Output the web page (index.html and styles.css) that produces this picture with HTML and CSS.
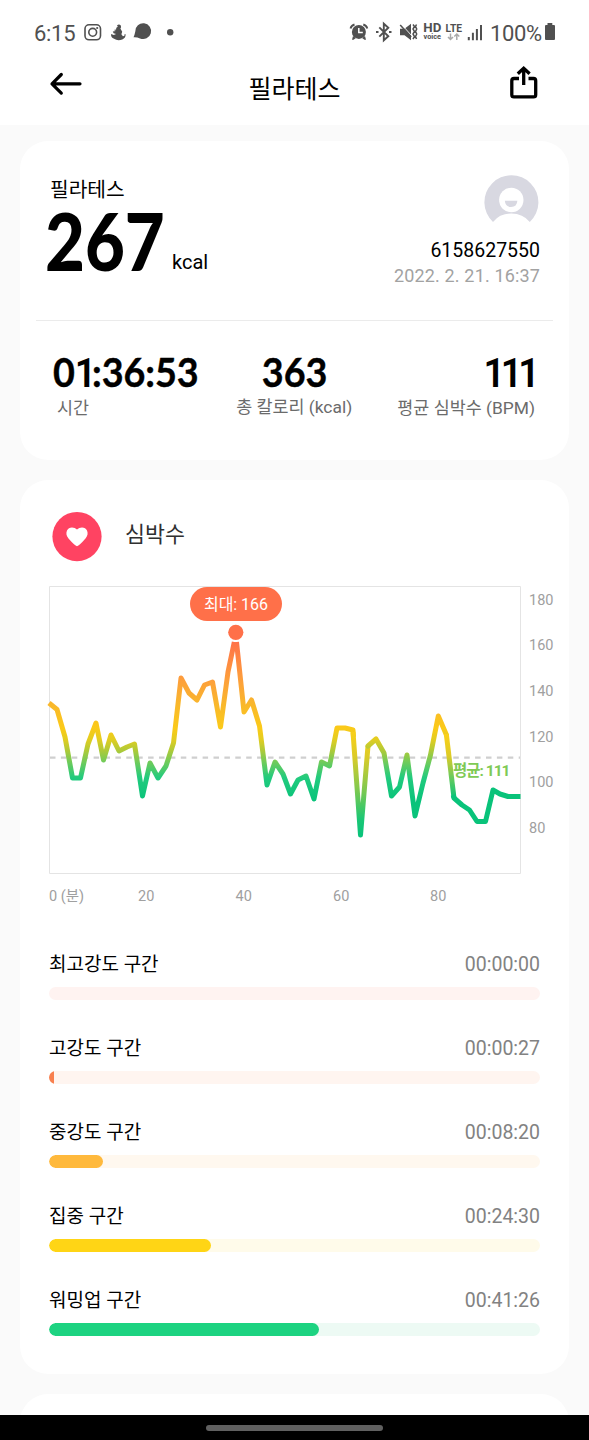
FILE: index.html
```html
<!DOCTYPE html>
<html lang="ko">
<head>
<meta charset="utf-8">
<title>필라테스</title>
<link rel="stylesheet" href="styles.css">
</head>
<body>
<div class="screen">
  <div class="status">
    <span class="clock">6:15</span>
    <svg class="status-left" width="94" height="24" viewBox="82 20 94 24">
      <g fill="none" stroke="#505050" stroke-width="1.6"><rect x="85" y="24.800" width="15.500" height="15" rx="4"/><circle cx="92.700" cy="32.300" r="3.900"/></g>
      <circle cx="97.200" cy="28" r="1.100" fill="#505050"/>
      <path fill="#505050" d="M117 25.500q2-2.200 3.800 0 .8 1.800-.4 3l1.800 3.200-.8 2.600 1.500 2q2.400-.2 1.600-2.200l1.100.2q.2 3.600-3.300 5.300-5 1.500-8.200-.8-3.500-1.300-3-4.700l2.700 1 2.300-1.100-2.500-.8-.8-1.800 3-.4-2-1 2.300-.6.200-1.600 1.500-1z"/>
      <path fill="#505050" d="M133.500 37.200q1-1.800 1.800-5.800a7.900 7.900 0 1 1 4.700 7q-3-1.500-6.500-1.200z"/>
      <circle cx="170.200" cy="32.200" r="3.200" fill="#505050"/>
    </svg>
    <svg class="status-right" width="136" height="24" viewBox="348 20 136 24">
      <g fill="#505050">
        <circle cx="358.900" cy="31.900" r="7"/>
        <path d="M353 36l3 2-2.500 1.700h-1.500zm12 0l-3 2 2.500 1.700h1.500z"/>
      </g>
      <path d="M350.500 28.500q.8-3 4-4M367.300 28.500q-.8-3-4-4" fill="none" stroke="#505050" stroke-width="1.900"/>
      <path d="M358.800 28v4.500h4" fill="none" stroke="#fff" stroke-width="1.500"/>
      <path d="M379.300 27.300l9 9-4.500 4V23.700l4.500 4-9 9" fill="none" stroke="#505050" stroke-width="1.900"/>
      <path d="M376 32h2.500M389 32h2.500" stroke="#505050" stroke-width="2.200"/>
      <path fill="#505050" d="M400 28.700h4.500l6.500-5v16.500l-6.500-5H400z"/>
      <path d="M401 24l11 12" stroke="#fff" stroke-width="1"/>
      <path d="M400.200 25l11 12" stroke="#505050" stroke-width="1.500"/>
      <path d="M413 24.500l1.500 2-1.500 2.500 1.500 2.500-1.500 2.500 1.500 2.500-1.500 2.700M416.500 24.500l-1 2 1.200 2.500-1.200 2.500 1.200 2.500-1.200 2.500 1 2.500" fill="none" stroke="#505050" stroke-width="1.500"/>
      <g class="net"><text x="423.300" y="32.300" font-size="12.500" textLength="18" lengthAdjust="spacingAndGlyphs">HD</text><text x="423.500" y="38.800" font-size="7" textLength="17.500" lengthAdjust="spacingAndGlyphs">voice</text><text x="445.500" y="31.500" font-size="11" textLength="16.500" lengthAdjust="spacingAndGlyphs">LTE</text></g>
      <path d="M450.500 33.500v6m-2.500-2.500l2.500 2.500 2.500-2.500M456.800 40v-6m-2.500 2.500l2.500-2.500 2.500 2.500" fill="none" stroke="#aaa" stroke-width="1.500"/>
      <g fill="#505050"><path d="M467.800 37h2v3.200h-2zM471.900 32.800h2v7.400h-2zM475.900 29h2v11.200h-2zM480 25h2v15.200h-2z"/></g>
    </svg>
    <span class="percent">100%</span>
    <svg class="battery" width="12" height="18" viewBox="0 0 12 18"><path fill="#505050" d="M3.500 0h4.800v2H10q1 0 1 1v13q0 1-1 1H2q-1 0-1-1V3q0-1 1-1h1.500z"/></svg>
  </div>
  <header class="header">
    <svg class="back" width="34" height="26" viewBox="48 71 34 26"><path d="M52 83.800h28M61.300 74.500L52 83.800l9.300 9.300" fill="none" stroke="#000" stroke-width="3.200" stroke-linecap="round" stroke-linejoin="round"/></svg>
    <h1 class="title">필라테스</h1>
    <svg class="share" width="30" height="34" viewBox="509 66 30 34"><path d="M519 78.500H514q-2.200 0-2.200 2.200v14q0 2.200 2.200 2.200h19.500q2.200 0 2.200-2.200v-14q0-2.200-2.200-2.200H528.500M523.700 85V69M517.800 73.800l5.900-5.500 5.900 5.500" fill="none" stroke="#000" stroke-width="3.300"/></svg>
  </header>

  <main class="feed">
    <section class="card summary">
      <div class="hero">
        <div class="burn">
          <div class="activity">필라테스</div>
          <div class="kcal"><span class="kcal-value">267</span><span class="kcal-unit">kcal</span></div>
        </div>
        <div class="user">
          <svg class="avatar" width="56" height="50" viewBox="483 175 56 50">
            <path fill="#d8d8e1" d="M493 222A27 27 0 1 1 529.800 222Q523 213.500 511.300 213.500T493 222z"/>
            <circle cx="511.300" cy="200" r="12.200" fill="#fff"/>
            <path fill="#d8d8e1" d="M504.800 200.800h12.600q-.5 6.200-6.300 6.200t-6.300-6.200z"/>
          </svg>
          <div class="user-id">6158627550</div>
          <div class="date">2022. 2. 21. 16:37</div>
        </div>
      </div>
      <div class="stats">
        <div class="stat time"><div class="value">0<span class="one">1</span>:36:53</div><div class="label">시간</div></div>
        <div class="stat total"><div class="value">363</div><div class="label">총 칼로리 (kcal)</div></div>
        <div class="stat pulse"><div class="value"><span class="one">111</span></div><div class="label">평균 심박수 (BPM)</div></div>
      </div>
    </section>

    <section class="card heart">
      <div class="heart-head">
        <svg width="50" height="50" viewBox="0 0 50 50"><circle cx="25" cy="24.600" r="24.600" fill="#ff4362"/><path fill="#fff" d="M25 34.300Q22.800 33.800 16.300 26.300 13.300 22.500 15 18.600 16.500 15.500 20 15.400 23 15.500 25 17.600 27 15.500 30 15.400 33.500 15.500 35 18.600 36.700 22.500 33.700 26.300 27.200 33.800 25 34.300z"/></svg>
        <h2 class="heart-title">심박수</h2>
      </div>
      <svg class="chart" width="549" height="330" viewBox="20 580 549 330">
        <defs>
          <linearGradient id="zones" gradientUnits="userSpaceOnUse" x1="0" y1="640" x2="0" y2="800">
            <stop offset="0" stop-color="#ff7049"/><stop offset=".25" stop-color="#fd9f3b"/><stop offset=".4" stop-color="#f9b72c"/><stop offset=".55" stop-color="#fbca18"/><stop offset=".62" stop-color="#e3cd20"/><stop offset=".69" stop-color="#afca38"/><stop offset=".76" stop-color="#72cb59"/><stop offset=".86" stop-color="#22cb7e"/><stop offset="1" stop-color="#09c37a"/>
          </linearGradient>
          <linearGradient id="steep" gradientUnits="userSpaceOnUse" x1="0" y1="730" x2="0" y2="835">
            <stop offset="0" stop-color="#fbd019"/><stop offset=".25" stop-color="#dccb27"/><stop offset=".55" stop-color="#84c94d"/><stop offset=".85" stop-color="#1bc775"/><stop offset="1" stop-color="#09c37a"/>
          </linearGradient>
          <linearGradient id="drop" gradientUnits="userSpaceOnUse" x1="0" y1="734" x2="0" y2="798">
            <stop offset="0" stop-color="#fbd019"/><stop offset=".35" stop-color="#dccb27"/><stop offset=".65" stop-color="#72cb59"/><stop offset="1" stop-color="#09c37a"/>
          </linearGradient>
        </defs>
        <path d="M49.500 586.500H520.500V873.500H49.500z" fill="none" stroke="#e4e4e4"/>
        <path d="M50 757.700H520" stroke="#cfcfcf" stroke-width="2.200" stroke-dasharray="5.500 5.400"/>
        <g fill="none" stroke-width="5" stroke-linejoin="round">
          <polyline stroke="url(#zones)" points="49,703 57,709.500 65,737 72.500,778 80.500,778 88,744 96,723 103.500,760 111,735 119,751 127,747 134.500,744 142.500,796 150,763 158,778 166,766 173.500,743 181,678 189,693 197,700 204.500,685 212.500,682 220.500,727 228,672 234.300,642"/>
          <polyline stroke="url(#zones)" points="236.500,642 244,712 251.500,700 259.500,726 267,785 275,762 283,774 290.500,794 298,780 306,776 314,799 321.500,762 329.500,766 337,728 345,728 353,730 353.500,737"/>
          <polyline stroke="url(#steep)" points="353,732 360.500,835 368,746"/>
          <polyline stroke="url(#zones)" stroke-linecap="round" points="368,746 376,739 384,753 391.500,796 399.500,787 407,755 415,816 423,783 430.500,755 438.300,716 446.500,735"/>
          <polyline stroke="url(#drop)" points="446.300,734 454,798"/>
          <polyline stroke="#09c37a" points="453.200,795 454,798 462,805 469.500,810 477,821.500 485.500,821.500 493,790 500,794 508,796.500 520.500,796.500"/>
        </g>
        <circle cx="235.800" cy="632.300" r="8.700" fill="#fff"/>
        <circle cx="235.800" cy="632.300" r="7.600" fill="#ff7049"/>
        <rect x="190" y="587" width="92" height="34" rx="17" fill="#ff7049"/>
        <text class="peak" x="204" y="609.600" textLength="64">최대: 166</text>
        <text class="average" x="453" y="776" textLength="57.500">평균: 111</text>
        <g class="axis">
          <text x="529" y="604.500">180</text><text x="529" y="650.200">160</text><text x="529" y="695.800">140</text><text x="529" y="741.500">120</text><text x="529" y="787">100</text><text x="529" y="832.500">80</text>
          <text x="49" y="901" textLength="35">0 (분)</text><text x="138" y="901">20</text><text x="235.500" y="901">40</text><text x="333" y="901">60</text><text x="430" y="901">80</text>
        </g>
      </svg>
      <div class="zones">
        <div class="zone peak-zone"><div class="row"><span>최고강도 구간</span><time>00:00:00</time></div><div class="track"></div></div>
        <div class="zone high"><div class="row"><span>고강도 구간</span><time>00:00:27</time></div><div class="track"><div class="fill" style="width:5px"></div></div></div>
        <div class="zone mid"><div class="row"><span>중강도 구간</span><time>00:08:20</time></div><div class="track"><div class="fill" style="width:54px"></div></div></div>
        <div class="zone focus"><div class="row"><span>집중 구간</span><time>00:24:30</time></div><div class="track"><div class="fill" style="width:162px"></div></div></div>
        <div class="zone warm"><div class="row"><span>워밍업 구간</span><time>00:41:26</time></div><div class="track"><div class="fill" style="width:270px"></div></div></div>
      </div>
    </section>
    <section class="card next"></section>
  </main>
  <footer class="nav"><div class="handle"></div></footer>
</div>
</body>
</html>
```

FILE: styles.css
```css
* { box-sizing: border-box; }
body { margin: 0; background: #fafafa; }
.screen { width: 589px; height: 1440px; overflow: hidden; display: flex; flex-direction: column; font-family: Roboto, "Noto Sans CJK KR", sans-serif; color: #000; }
svg { display: block; flex: none; }

.status { height: 65px; flex: none; display: flex; align-items: flex-start; padding: 20px 33px 0 34px; background: #fff; color: #505050; }
.clock { width: 48px; font-size: 22px; line-height: 27px; letter-spacing: -.3px; }
.status-right { margin-left: 172px; }
.net text { font-family: Roboto, sans-serif; font-weight: 700; fill: #505050; }
.percent { width: 54px; margin-left: 6px; font-size: 22px; line-height: 27px; letter-spacing: -.4px; }
.battery { margin-top: 3px; }

.header { height: 60px; flex: none; display: flex; justify-content: space-between; padding: 0 50px 0 48px; background: #fff; }
.back { margin-top: 6px; }
.share { margin-top: 1px; }
.title { margin: 6px 2px 0 0; font-size: 25px; line-height: 37px; font-weight: 400; }

.feed { flex: 1; min-height: 0; overflow: hidden; display: flex; flex-direction: column; gap: 20px; padding: 16px 20px 0; }
.card { flex: none; background: #fff; border-radius: 28px; }
.summary { height: 319px; padding: 0 16px; }
.hero { height: 180px; display: flex; justify-content: space-between; padding: 34px 13px 0 14px; border-bottom: 1.500px solid #ebebeb; }
.activity { height: 28px; font-size: 20.300px; line-height: 30px; }
.kcal { display: flex; height: 78px; }
.kcal-value { width: 121px; margin-left: -5px; font: 900 80px/74px Lato, sans-serif; transform: scaleX(.86); transform-origin: left; }
.kcal-unit { margin: 46px 0 0 6px; font-size: 20px; line-height: 26px; }
.user { display: flex; flex-direction: column; align-items: flex-end; }
.avatar { margin-right: 1px; }
.user-id { margin-top: 13px; font-size: 19.500px; line-height: 26px; }
.date { font-size: 18px; line-height: 24px; letter-spacing: .15px; color: #a2a2a2; }
.stats { display: flex; justify-content: space-between; padding: 28px 18px 0 17px; }
.stat { display: flex; flex-direction: column; }
.value { font: 700 41px/46px Lato, sans-serif; white-space: nowrap; letter-spacing: -.1px; transform: scaleX(.92); -webkit-text-stroke: .4px #000; }
.value .one { font-family: Roboto, sans-serif; font-weight: 600; letter-spacing: -4.600px; -webkit-text-stroke: 0; }
.label { font-size: 17.400px; line-height: 25px; color: #6b6b6b; white-space: nowrap; }
.time { width: 138px; }
.time .value { transform-origin: left; }
.time .label { padding-left: 4px; }
.total { align-items: center; }
.pulse { align-items: flex-end; }
.pulse .value { transform-origin: right; }

.heart { height: 894px; }
.heart-head { height: 100px; display: flex; padding: 32px 0 0 32px; gap: 23px; }
.heart-title { margin: 6px 0 0; font-size: 21.700px; line-height: 34px; font-weight: 400; color: #303030; }
.chart text { font-family: Roboto, "Noto Sans CJK KR", sans-serif; }
.chart .peak { font-size: 16px; fill: #fff; }
.chart .average { font-size: 15.500px; font-weight: 700; fill: #80ca55; }
.chart .axis text { font-size: 14.500px; fill: #a0a0a0; }
.zones { display: flex; flex-direction: column; gap: 42px; padding: 37px 29px 0 29px; }
.zone { height: 42px; }
.row { height: 40px; display: flex; justify-content: space-between; font-size: 19px; line-height: 36px; }
.row time { font-size: 19.500px; color: #828282; }
.track { height: 13px; overflow: hidden; border-radius: 7px; }
.fill { height: 13px; border-radius: 7px; }
.peak-zone .track { background: #fff3f1; }
.high .track { background: #fff5f0; }
.high .fill { background: #f8804f; border-radius: 7px 0 0 7px; }
.mid .track { background: #fff8ef; }
.mid .fill { background: #ffb93c; }
.focus .track { background: #fffbea; }
.focus .fill { background: #ffd515; }
.warm .track { background: #edfaf4; }
.warm .fill { background: #1dd381; }
.next { height: 80px; }

.nav { height: 25px; flex: none; display: flex; justify-content: center; background: #000; }
.handle { width: 177px; height: 6px; margin-top: 10px; border-radius: 3px; background: #606060; }
```
